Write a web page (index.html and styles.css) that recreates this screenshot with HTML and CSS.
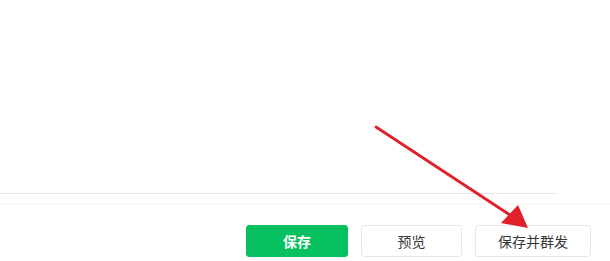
FILE: index.html
```html
<!DOCTYPE html>
<html lang="zh-CN">
<head>
    <meta charset="UTF-8">
    <title>保存并群发</title>
    <link rel="stylesheet" href="styles.css">
</head>
<body>
    <div class="page">
        <div class="editor"></div>
        <div class="footer">
            <button type="button" class="btn btn-primary">保存</button>
            <button type="button" class="btn btn-narrow">预览</button>
            <button type="button" class="btn btn-wide">保存并群发</button>
        </div>

        <!-- annotation arrow -->
        <svg class="arrow" width="610" height="261" viewBox="0 0 610 261">
            <line x1="376" y1="127" x2="513" y2="217" stroke="#e0202a" stroke-width="2.8" stroke-linecap="round"/>
            <polygon points="528,228 501,223 518,205" fill="#e0202a"/>
        </svg>
    </div>
</body>
</html>
```

FILE: styles.css
```css
body {
    margin: 0;
    padding: 0;
    background: #fff;
    font-family: "Noto Sans CJK SC", "Microsoft YaHei", sans-serif;
}

.page {
    position: relative;
    width: 610px;
    height: 261px;
    overflow: hidden;
}

.editor {
    width: 557px;
    height: 193px;
    border-bottom: 1px solid #e7e7eb;
}

.footer {
    border-top: 1px solid #f4f5f6;
    margin-top: 9px;
    padding: 21px 19px 0 0;
    display: flex;
    justify-content: flex-end;
    gap: 13px;
}

.btn {
    width: 102px;
    height: 32px;
    border: 1px solid #e4e8eb;
    border-radius: 3px;
    background: #fff;
    color: #353535;
    font-family: inherit;
    font-size: 14px;
    padding: 0;
    cursor: pointer;
}

.btn-primary {
    background: #07c160;
    border-color: #07c160;
    color: #fff;
    font-weight: bold;
}

.btn-narrow {
    width: 101px;
}

.btn-wide {
    width: 116px;
}

.arrow {
    position: absolute;
    left: 0;
    top: 0;
    pointer-events: none;
}
```
